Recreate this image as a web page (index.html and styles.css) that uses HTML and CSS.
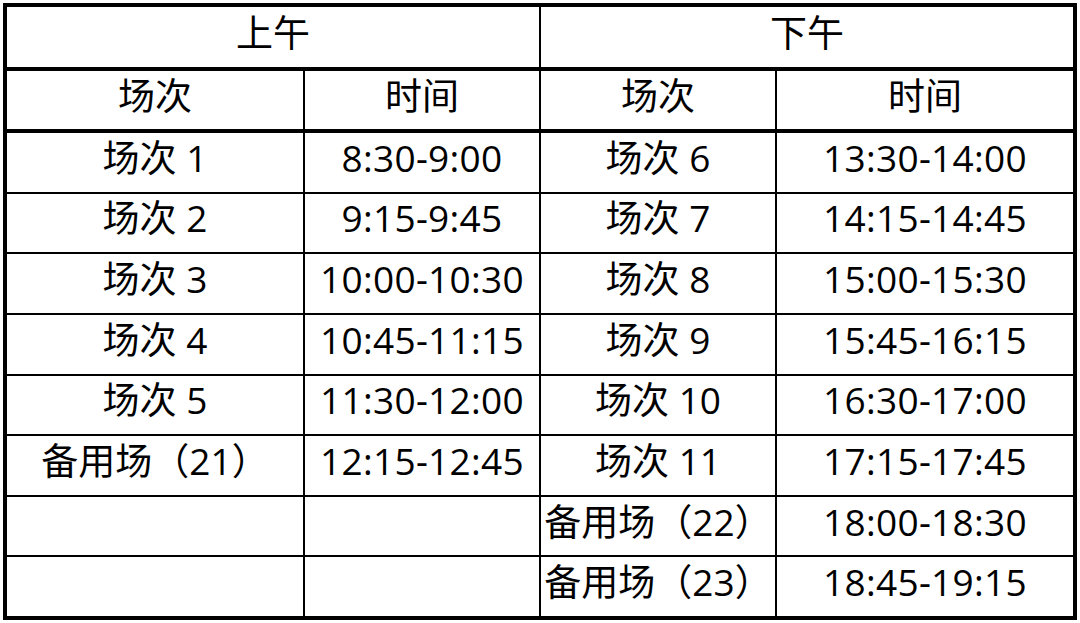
FILE: index.html
```html
<!DOCTYPE html>
<html lang="zh-CN">
<head>
<meta charset="utf-8">
<title>场次时间表</title>
<link rel="stylesheet" href="styles.css">
</head>
<body>
<div class="frame">
<table class="schedule">
<colgroup>
<col class="c1"><col class="c2"><col class="c3"><col class="c4">
</colgroup>
<tr class="head">
<td colspan="2" class="r">上午</td>
<td colspan="2">下午</td>
</tr>
<tr class="head">
<td class="r">场次</td><td class="r">时间</td><td class="r">场次</td><td>时间</td>
</tr>
<tr class="row"><td class="r">场次 1</td><td class="r t">8:30-9:00</td><td class="r">场次 6</td><td class="t">13:30-14:00</td></tr>
<tr class="row"><td class="r">场次 2</td><td class="r t">9:15-9:45</td><td class="r">场次 7</td><td class="t">14:15-14:45</td></tr>
<tr class="row"><td class="r">场次 3</td><td class="r t">10:00-10:30</td><td class="r">场次 8</td><td class="t">15:00-15:30</td></tr>
<tr class="row"><td class="r">场次 4</td><td class="r t">10:45-11:15</td><td class="r">场次 9</td><td class="t">15:45-16:15</td></tr>
<tr class="row"><td class="r">场次 5</td><td class="r t">11:30-12:00</td><td class="r">场次 10</td><td class="t">16:30-17:00</td></tr>
<tr class="row"><td class="r">备用场（21）</td><td class="r t">12:15-12:45</td><td class="r">场次 11</td><td class="t">17:15-17:45</td></tr>
<tr class="row"><td class="r"></td><td class="r"></td><td class="r">备用场（22）</td><td class="t">18:00-18:30</td></tr>
<tr class="row last"><td class="r"></td><td class="r"></td><td class="r">备用场（23）</td><td class="t">18:45-19:15</td></tr>
</table>
</div>
</body>
</html>
```

FILE: styles.css
```css
html, body {
  margin: 0;
  padding: 0;
  background: #ffffff;
}

body {
  width: 1080px;
  height: 623px;
  overflow: hidden;
  font-family: "Open Sans", "Noto Sans CJK SC", sans-serif;
  color: #000000;
}

.frame {
  margin: 3px 0 0 3px;
  width: 1066px;
  height: 609px;
  border: 4px solid #000000;
}

.schedule {
  width: 1066px;
  border-collapse: separate;
  border-spacing: 0;
  table-layout: fixed;
}

.c1 { width: 298px; }
.c2 { width: 236px; }
.c3 { width: 236px; }
.c4 { width: 296px; }

.schedule td {
  box-sizing: border-box;
  padding: 0 0 10px 0;
  text-align: center;
  vertical-align: middle;
  font-size: 37px;
  line-height: 1;
  white-space: nowrap;
  border-bottom: 2px solid #000000;
}

.schedule td.t {
  letter-spacing: 0.3px;
}

.schedule td.r {
  border-right: 2px solid #000000;
}

.head td {
  border-bottom-width: 4px;
}

.head:first-child td {
  height: 64px;
}

.head + .head td {
  height: 62px;
}

.row td {
  height: 60.625px;
}

.row.last td {
  height: 58.625px;
  border-bottom: none;
}
```
